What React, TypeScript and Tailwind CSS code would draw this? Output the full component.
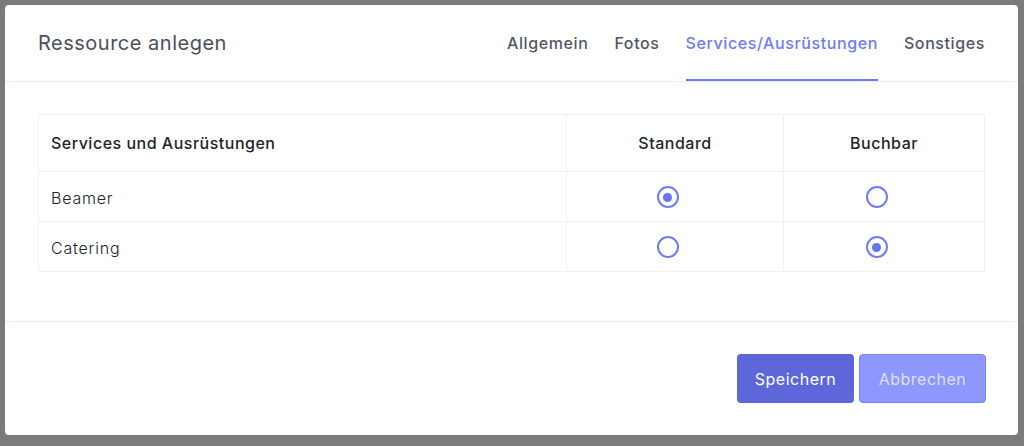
const tabs = ["Allgemein", "Fotos", "Services/Ausrüstungen", "Sonstiges"];

const rows = [
  { name: "Beamer", standard: true, buchbar: false },
  { name: "Catering", standard: false, buchbar: true },
];

function Radio({ checked }: { checked: boolean }) {
  return (
    <span className="w-[22px] h-[22px] rounded-full border-2 border-[#6f7cf8] flex items-center justify-center">
      {checked && <span className="w-[9px] h-[9px] rounded-full bg-[#6673f5]" />}
    </span>
  );
}

export default function App() {
  return (
    <div className="w-[1024px] h-[446px] bg-[#7b7b7b] pt-[5px] pl-[5px] font-['Inter',sans-serif]">
      <div className="w-[1013px] h-[430px] bg-white rounded-[4px] flex flex-col">
        <div className="h-[77px] flex items-center justify-between pl-[33px] pr-[33px] border-b border-[#eceef3]">
          <h2 className="text-[20px] text-[#4a5060] tracking-[0.5px]">Ressource anlegen</h2>
          <nav className="self-stretch flex gap-[26px]">
            {tabs.map((t) => (
              <div
                key={t}
                className={
                  t === "Services/Ausrüstungen"
                    ? "flex items-center pt-[2px] border-b-2 border-[#6d7bff] text-[16px] font-medium tracking-[0.6px] text-[#6d7bff]"
                    : "flex items-center pt-[2px] border-b-2 border-transparent text-[16px] font-medium tracking-[0.6px] text-[#525765]"
                }
              >
                {t}
              </div>
            ))}
          </nav>
        </div>

        <div className="pt-[32px] pb-[49px] px-[33px] border-b border-[#eceef3]">
          <table className="w-[947px] border-collapse text-[16px] tracking-[0.5px] text-[#212529]">
            <thead>
              <tr className="h-[57px]">
                <th className="w-[528px] border border-[#eef0f4] pl-[12px] text-left font-medium">
                  Services und Ausrüstungen
                </th>
                <th className="w-[217px] border border-[#eef0f4] text-center font-medium">Standard</th>
                <th className="border border-[#eef0f4] text-center font-medium">Buchbar</th>
              </tr>
            </thead>
            <tbody>
              {rows.map((r) => (
                <tr key={r.name} className="h-[50px]">
                  <td className="border border-[#eef0f4] pl-[12px] pt-[2px] font-light tracking-[0.8px]">
                    {r.name}
                  </td>
                  <td className="border border-[#eef0f4]">
                    <div className="flex justify-center pr-[15px] pt-[1px]">
                      <Radio checked={r.standard} />
                    </div>
                  </td>
                  <td className="border border-[#eef0f4]">
                    <div className="flex justify-center pr-[15px] pt-[1px]">
                      <Radio checked={r.buchbar} />
                    </div>
                  </td>
                </tr>
              ))}
            </tbody>
          </table>
        </div>

        <div className="flex justify-end gap-[5px] pt-[32px] pr-[32px]">
          <button className="w-[117px] h-[49px] rounded-[4px] bg-[#5e67d9] text-white text-[16px] tracking-[0.5px]">
            Speichern
          </button>
          <button className="w-[127px] h-[49px] rounded-[4px] bg-[#8c97ff] border border-[#7683fb] text-[#dde1ff] text-[16px] tracking-[0.5px]">
            Abbrechen
          </button>
        </div>
      </div>
    </div>
  );
}
